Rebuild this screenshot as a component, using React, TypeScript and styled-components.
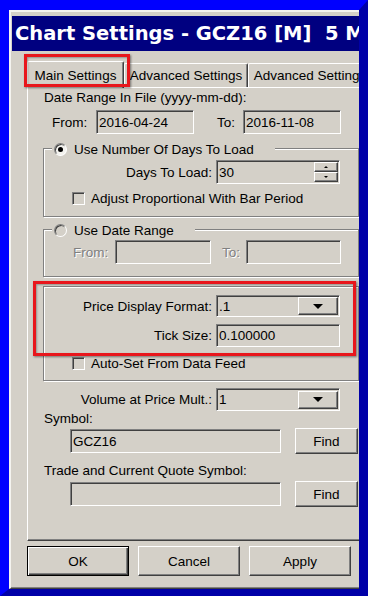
import React from "react";
import styled, { createGlobalStyle } from "styled-components";

const GlobalStyle = createGlobalStyle`
  html, body {
    margin: 0;
    padding: 0;
  }
  body {
    width: 368px;
    height: 596px;
    overflow: hidden;
    font-family: "Liberation Sans", Arial, sans-serif;
    font-size: 13.5px;
    color: #000;
  }
`;

const FACE = "#d4d0c8";

const Screen = styled.div`
  box-sizing: border-box;
  width: 368px;
  height: 596px;
  display: flex;
  border-style: solid;
  border-width: 10px 9px 7px 9px;
  border-color: #0000ff #0000a8 #0000a8 #0000ff;
`;

const Dialog = styled.div`
  flex: 1;
  min-width: 0;
  overflow: hidden;
  display: flex;
  flex-direction: column;
  background: ${FACE};
  border-top: 2px solid #f4f3ef;
  border-left: 2px solid #f4f3ef;
  border-bottom: 1px solid #404040;
  box-shadow: inset 0 -1px #808080;
  padding: 4px 0 0 1px;
`;

const TitleBar = styled.div`
  flex-shrink: 0;
  height: 35px;
  display: flex;
  align-items: center;
  padding-left: 3px;
  background: #000080;
  color: #fff;
  font-family: "DejaVu Sans", Verdana, sans-serif;
  font-weight: bold;
  font-size: 19.5px;
  white-space: pre;
  overflow: hidden;
`;

const Body = styled.div`
  display: flex;
  flex-direction: column;
  padding: 10px 0 0 15px;
`;

const TabRow = styled.div`
  display: flex;
  align-items: flex-end;
  height: 26px;
  flex-shrink: 0;
`;

const Tab = styled.div<{ $active?: boolean; $w: number }>`
  position: relative;
  box-sizing: border-box;
  flex-shrink: 0;
  width: ${(p) => p.$w}px;
  height: ${(p) => (p.$active ? 27 : 24)}px;
  margin-bottom: ${(p) => (p.$active ? -1 : 0)}px;
  z-index: ${(p) => (p.$active ? 1 : 0)};
  display: flex;
  align-items: center;
  justify-content: center;
  white-space: nowrap;
  background: ${FACE};
  border-top: 1px solid #fff;
  border-left: 1px solid #fff;
  border-right: 1px solid #404040;
  box-shadow: inset -1px 0 #808080;
  border-radius: 2px 2px 0 0;
`;

const RedMark = styled.div<{ $l: number; $t: number; $r: number; $b: number }>`
  position: absolute;
  left: ${(p) => p.$l}px;
  top: ${(p) => p.$t}px;
  right: ${(p) => p.$r}px;
  bottom: ${(p) => p.$b}px;
  border: 3px solid #e8161c;
  box-shadow: 1px 1px 2px rgba(0, 0, 0, 0.45), inset 1px 1px 2px rgba(0, 0, 0, 0.3);
  pointer-events: none;
  z-index: 2;
`;

const Panel = styled.div`
  display: flex;
  flex-direction: column;
  border-top: 1px solid #fff;
  border-left: 1px solid #fff;
  border-bottom: 1px solid #404040;
  box-shadow: inset 0 -1px #808080;
  padding: 1px 0 33px 15px;
`;

const Row = styled.div<{ $mt?: number; $h: number; $pl?: number }>`
  display: flex;
  align-items: center;
  flex-shrink: 0;
  height: ${(p) => p.$h}px;
  margin-top: ${(p) => p.$mt ?? 0}px;
  padding-left: ${(p) => p.$pl ?? 0}px;
  white-space: nowrap;
`;

const Label = styled.span<{ $w?: number; $right?: boolean; $off?: boolean }>`
  flex-shrink: 0;
  ${(p) => (p.$w ? `width: ${p.$w}px;` : "")}
  text-align: ${(p) => (p.$right ? "right" : "left")};
  margin-right: ${(p) => (p.$right ? 4 : 0)}px;
  color: ${(p) => (p.$off ? "#808080" : "#000")};
  text-shadow: ${(p) => (p.$off ? "1px 1px #fff" : "none")};
`;

const Field = styled.div<{ $w: number; $h?: number }>`
  box-sizing: border-box;
  flex-shrink: 0;
  width: ${(p) => p.$w}px;
  height: ${(p) => p.$h ?? 24}px;
  display: flex;
  align-items: center;
  justify-content: space-between;
  padding: 0 1px 0 2px;
  background: ${FACE};
  border: 1px solid;
  border-color: #808080 #fff #fff #808080;
  box-shadow: inset 1px 1px #404040;
`;

const Group = styled.div<{ $mt: number; $pb: number }>`
  position: relative;
  box-sizing: border-box;
  width: 316px;
  flex-shrink: 0;
  display: flex;
  flex-direction: column;
  margin-top: ${(p) => p.$mt}px;
  padding-bottom: ${(p) => p.$pb}px;
  border: 1px solid #808080;
  box-shadow: inset 1px 1px #fff, 1px 1px #fff;
`;

const Legend = styled.div`
  align-self: flex-start;
  display: flex;
  align-items: center;
  gap: 7px;
  height: 16px;
  margin: -8px 0 0 8px;
  padding: 0 21px 0 2px;
  background: ${FACE};
  white-space: nowrap;
`;

const Radio = styled.span<{ $checked?: boolean }>`
  box-sizing: border-box;
  width: 13px;
  height: 13px;
  border-radius: 50%;
  border: 1px solid;
  border-color: #808080 #fff #fff #808080;
  box-shadow: inset 1px 1px #404040;
  background: ${(p) => (p.$checked ? "#f4f3ef" : FACE)};
  display: flex;
  align-items: center;
  justify-content: center;
  &::after {
    content: "";
    display: ${(p) => (p.$checked ? "block" : "none")};
    width: 5px;
    height: 5px;
    border-radius: 50%;
    background: #000;
  }
`;

const Check = styled.span`
  box-sizing: border-box;
  flex-shrink: 0;
  width: 13px;
  height: 13px;
  margin: 0 6px 0 28px;
  background: ${FACE};
  border: 1px solid;
  border-color: #808080 #fff #fff #808080;
  box-shadow: inset 1px 1px #404040;
`;

const Spin = styled.div`
  display: flex;
  flex-direction: column;
`;

const SpinButton = styled.div<{ $down?: boolean }>`
  box-sizing: border-box;
  width: 24px;
  height: 10px;
  display: flex;
  align-items: center;
  justify-content: center;
  background: ${FACE};
  border-top: 1px solid #fff;
  border-left: 1px solid #fff;
  border-right: 1px solid #404040;
  border-bottom: 1px solid #404040;
  box-shadow: inset -1px -1px #808080;
  &::after {
    content: "";
    border-left: 2px solid transparent;
    border-right: 2px solid transparent;
    ${(p) => (p.$down ? "border-top: 2px solid #000;" : "border-bottom: 2px solid #000;")}
  }
`;

const DropButton = styled.div`
  box-sizing: border-box;
  width: 40px;
  height: 18px;
  display: flex;
  align-items: center;
  justify-content: center;
  background: ${FACE};
  border-top: 1px solid #fff;
  border-left: 1px solid #fff;
  border-right: 1px solid #404040;
  border-bottom: 1px solid #404040;
  box-shadow: inset -1px -1px #808080;
  &::after {
    content: "";
    border-left: 5px solid transparent;
    border-right: 5px solid transparent;
    border-top: 5px solid #000;
  }
`;

const Button = styled.div<{ $w: number; $h: number; $default?: boolean }>`
  box-sizing: border-box;
  flex-shrink: 0;
  width: ${(p) => p.$w}px;
  height: ${(p) => p.$h}px;
  display: flex;
  align-items: center;
  justify-content: center;
  background: ${FACE};
  ${(p) =>
    p.$default
      ? `border: 1px solid #000;
         box-shadow: inset 1px 1px #fff, inset -1px -1px #404040, inset -2px -2px #808080;`
      : `border-top: 1px solid #fff;
         border-left: 1px solid #fff;
         border-right: 1px solid #404040;
         border-bottom: 1px solid #404040;
         box-shadow: inset -1px -1px #808080;`}
`;

const ButtonBar = styled.div`
  display: flex;
  gap: 9px;
  margin-top: 5px;
  height: 30px;
`;

const Combo = ({ value, h }: { value: string; h: number }) => (
  <Field $w={124} $h={h}>
    <span>{value}</span>
    <DropButton />
  </Field>
);

export default function App() {
  return (
    <>
      <GlobalStyle />
      <Screen>
        <Dialog>
          <TitleBar>Chart Settings - GCZ16 [M]  5 Min</TitleBar>
          <Body>
            <TabRow>
              <Tab $active $w={97}>
                Main Settings
                <RedMark $l={-4} $t={-8} $r={-7} $b={1} />
              </Tab>
              <Tab $w={124}>Advanced Settings</Tab>
              <Tab $w={124}>Advanced Settings</Tab>
            </TabRow>
            <Panel>
              <Row $h={16} $pl={1}>
                Date Range In File (yyyy-mm-dd):
              </Row>
              <Row $mt={5} $h={24} $pl={9}>
                <Label $w={44}>From:</Label>
                <Field $w={98}>2016-04-24</Field>
                <Label $w={26} style={{ marginLeft: 23 }}>
                  To:
                </Label>
                <Field $w={98}>2016-11-08</Field>
              </Row>

              <Group $mt={14} $pb={10}>
                <Legend>
                  <Radio $checked />
                  Use Number Of Days To Load
                </Legend>
                <Row $mt={3} $h={24}>
                  <Label $w={168} $right>
                    Days To Load:
                  </Label>
                  <Field $w={124}>
                    <span>30</span>
                    <Spin>
                      <SpinButton />
                      <SpinButton $down />
                    </Spin>
                  </Field>
                </Row>
                <Row $mt={6} $h={16}>
                  <Check />
                  Adjust Proportional With Bar Period
                </Row>
              </Group>

              <Group $mt={12} $pb={12}>
                <Legend>
                  <Radio />
                  Use Date Range
                </Legend>
                <Row $mt={2} $h={24} $pl={29}>
                  <Label $w={42} $off>
                    From:
                  </Label>
                  <Field $w={96} />
                  <Label $w={24} $off style={{ marginLeft: 11 }}>
                    To:
                  </Label>
                  <Field $w={95} />
                </Row>
              </Group>

              <Group $mt={9} $pb={9}>
                <Row $mt={8} $h={22}>
                  <Label $w={168} $right>
                    Price Display Format:
                  </Label>
                  <Combo value=".1" h={22} />
                </Row>
                <Row $mt={7} $h={23}>
                  <Label $w={168} $right>
                    Tick Size:
                  </Label>
                  <Field $w={124} $h={23}>
                    0.100000
                  </Field>
                </Row>
                <Row $mt={8} $h={16}>
                  <Check />
                  Auto-Set From Data Feed
                </Row>
                <RedMark $l={-11} $t={-6} $r={2} $b={24} />
              </Group>

              <Row $mt={7} $h={23}>
                <Label $w={169} $right>
                  Volume at Price Mult.:
                </Label>
                <Combo value="1" h={23} />
              </Row>
              <Row $h={14} $pl={1}>
                Symbol:
              </Row>
              <Row $mt={3} $h={26} $pl={27}>
                <Field $w={211}>GCZ16</Field>
                <Button $w={63} $h={26} style={{ marginLeft: 14 }}>
                  Find
                </Button>
              </Row>
              <Row $mt={9} $h={14} $pl={1}>
                Trade and Current Quote Symbol:
              </Row>
              <Row $mt={4} $h={26} $pl={27}>
                <Field $w={211} />
                <Button $w={63} $h={26} style={{ marginLeft: 14 }}>
                  Find
                </Button>
              </Row>
            </Panel>
            <ButtonBar>
              <Button $w={102} $h={30} $default>
                OK
              </Button>
              <Button $w={102} $h={30}>
                Cancel
              </Button>
              <Button $w={102} $h={30}>
                Apply
              </Button>
            </ButtonBar>
          </Body>
        </Dialog>
      </Screen>
    </>
  );
}
